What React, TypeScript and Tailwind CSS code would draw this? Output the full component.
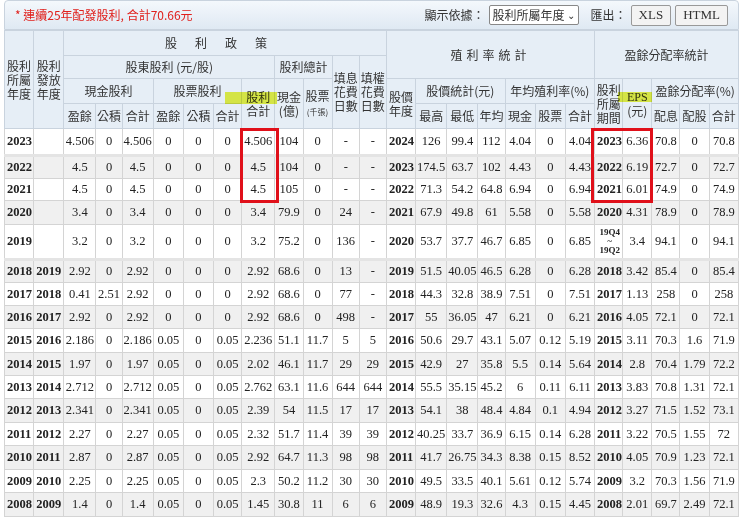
const widths = [29, 30, 32, 26, 31, 30, 30, 28, 33, 28, 29, 27, 27, 29, 31, 31, 27, 30, 30, 29, 28, 29, 28, 29, 29];

type Row = { c: string[]; h: number; gap?: boolean };

const rows: Row[] = [
  { c: '2023,,4.506,0,4.506,0,0,0,4.506,104,0,-,-,2024,126,99.4,112,4.04,0,4.04,2023,6.36,70.8,0,70.8'.split(','), h: 27 },
  { c: '2022,,4.5,0,4.5,0,0,0,4.5,104,0,-,-,2023,174.5,63.7,102,4.43,0,4.43,2022,6.19,72.7,0,72.7'.split(','), h: 23, gap: true },
  { c: '2021,,4.5,0,4.5,0,0,0,4.5,105,0,-,-,2022,71.3,54.2,64.8,6.94,0,6.94,2021,6.01,74.9,0,74.9'.split(','), h: 22 },
  { c: '2020,,3.4,0,3.4,0,0,0,3.4,79.9,0,24,-,2021,67.9,49.8,61,5.58,0,5.58,2020,4.31,78.9,0,78.9'.split(','), h: 24 },
  { c: '2019,,3.2,0,3.2,0,0,0,3.2,75.2,0,136,-,2020,53.7,37.7,46.7,6.85,0,6.85,Q,3.4,94.1,0,94.1'.split(','), h: 35 },
  { c: '2018,2019,2.92,0,2.92,0,0,0,2.92,68.6,0,13,-,2019,51.5,40.05,46.5,6.28,0,6.28,2018,3.42,85.4,0,85.4'.split(','), h: 23, gap: true },
  { c: '2017,2018,0.41,2.51,2.92,0,0,0,2.92,68.6,0,77,-,2018,44.3,32.8,38.9,7.51,0,7.51,2017,1.13,258,0,258'.split(','), h: 23 },
  { c: '2016,2017,2.92,0,2.92,0,0,0,2.92,68.6,0,498,-,2017,55,36.05,47,6.21,0,6.21,2016,4.05,72.1,0,72.1'.split(','), h: 23 },
  { c: '2015,2016,2.186,0,2.186,0.05,0,0.05,2.236,51.1,11.7,5,5,2016,50.6,29.7,43.1,5.07,0.12,5.19,2015,3.11,70.3,1.6,71.9'.split(','), h: 24 },
  { c: '2014,2015,1.97,0,1.97,0.05,0,0.05,2.02,46.1,11.7,29,29,2015,42.9,27,35.8,5.5,0.14,5.64,2014,2.8,70.4,1.79,72.2'.split(','), h: 23 },
  { c: '2013,2014,2.712,0,2.712,0.05,0,0.05,2.762,63.1,11.6,644,644,2014,55.5,35.15,45.2,6,0.11,6.11,2013,3.83,70.8,1.31,72.1'.split(','), h: 23 },
  { c: '2012,2013,2.341,0,2.341,0.05,0,0.05,2.39,54,11.5,17,17,2013,54.1,38,48.4,4.84,0.1,4.94,2012,3.27,71.5,1.52,73.1'.split(','), h: 24 },
  { c: '2011,2012,2.27,0,2.27,0.05,0,0.05,2.32,51.7,11.4,39,39,2012,40.25,33.7,36.9,6.15,0.14,6.28,2011,3.22,70.5,1.55,72'.split(','), h: 23 },
  { c: '2010,2011,2.87,0,2.87,0.05,0,0.05,2.92,64.7,11.3,98,98,2011,41.7,26.75,34.3,8.38,0.15,8.52,2010,4.05,70.9,1.23,72.1'.split(','), h: 24 },
  { c: '2009,2010,2.25,0,2.25,0.05,0,0.05,2.3,50.2,11.2,30,30,2010,49.5,33.5,40.1,5.61,0.12,5.74,2009,3.2,70.3,1.56,71.9'.split(','), h: 23 },
  { c: '2008,2009,1.4,0,1.4,0.05,0,0.05,1.45,30.8,11,6,6,2009,48.9,19.3,32.6,4.3,0.15,4.45,2008,2.01,69.7,2.49,72.1'.split(','), h: 24 },
];

const bold = new Set([0, 1, 13, 20]);
const th = 'border border-[#c9d3de] font-normal text-[#333] leading-[14px] p-0 whitespace-nowrap overflow-hidden';

export default function App() {
  return (
    <div className="w-[740px] h-[523px] overflow-hidden bg-white" style={{ fontFamily: '"Liberation Serif", "Noto Sans CJK TC", serif' }}>
      <div className="relative w-[735px] ml-[4px]">
        <div className="h-[30px] flex items-center justify-between px-[10px] bg-gradient-to-b from-[#f4f8fc] to-[#dfe9f3] border border-[#c9d3de] rounded-t-[4px] text-[12px]" style={{ fontFamily: '"Noto Sans CJK TC", sans-serif' }}>
          <span className="text-[#e0201c]">* 連續25年配發股利, 合計70.66元</span>
          <div className="flex items-center gap-[4px] text-[#333]">
            <span>顯示依據：</span>
            <span className="border border-[#888] rounded-[2px] bg-white px-[3px] h-[20px] flex items-center gap-[2px] leading-none">股利所屬年度 <span className="text-[10px]">⌄</span></span>
            <span className="ml-[8px]">匯出：</span>
            <span className="border border-[#999] rounded-[2px] bg-[#f3f3f3] px-[7px] h-[21px] flex items-center text-[13px]" style={{ fontFamily: '"Liberation Serif", serif' }}>XLS</span>
            <span className="border border-[#999] rounded-[2px] bg-[#f3f3f3] px-[7px] h-[21px] flex items-center text-[13px]" style={{ fontFamily: '"Liberation Serif", serif' }}>HTML</span>
          </div>
        </div>
        <table className="table-fixed border-collapse w-[735px] text-center">
          <colgroup>
            {widths.map((w, i) => <col key={i} style={{ width: w }} />)}
          </colgroup>
          <thead className="bg-[#e6eef6] text-[12px]" style={{ fontFamily: '"Noto Sans CJK TC", sans-serif' }}>
            <tr className="h-[25px]">
              <th rowSpan={4} className={th + ' font-bold'}>股利<br />所屬<br />年度</th>
              <th rowSpan={4} className={th + ' font-bold'}>股利<br />發放<br />年度</th>
              <th colSpan={11} className={th + ' font-bold tracking-[18px]'}>股利政策</th>
              <th colSpan={7} rowSpan={2} className={th + ' font-bold tracking-[4px]'}>殖利率統計</th>
              <th colSpan={5} rowSpan={2} className={th + ' font-bold'}>盈餘分配率統計</th>
            </tr>
            <tr className="h-[23px]">
              <th colSpan={7} className={th}>股東股利 (元/股)</th>
              <th colSpan={2} className={th}>股利總計</th>
              <th rowSpan={3} className={th}>填息<br />花費<br />日數</th>
              <th rowSpan={3} className={th}>填權<br />花費<br />日數</th>
            </tr>
            <tr className="h-[25px]">
              <th colSpan={3} className={th}>現金股利</th>
              <th colSpan={3} className={th}>股票股利</th>
              <th rowSpan={2} className={th}>股利<br />合計</th>
              <th rowSpan={2} className={th}>現金<br />(億)</th>
              <th rowSpan={2} className={th}>股票<br /><span className="text-[8px]">(千張)</span></th>
              <th rowSpan={2} className={th + ' font-bold'}>股價<br />年度</th>
              <th colSpan={3} className={th}>股價統計(元)</th>
              <th colSpan={3} className={th}>年均殖利率(%)</th>
              <th rowSpan={2} className={th + ' font-bold'}>股利<br />所屬<br />期間</th>
              <th rowSpan={2} className={th}><span style={{ fontFamily: '"Liberation Serif", serif' }}>EPS</span><br />(元)</th>
              <th colSpan={3} className={th}>盈餘分配率(%)</th>
            </tr>
            <tr className="h-[25px]">
              {['盈餘', '公積', '合計', '盈餘', '公積', '合計', '最高', '最低', '年均', '現金', '股票', '合計', '配息', '配股', '合計'].map((t, i) => (
                <th key={i} className={th}>{t}</th>
              ))}
            </tr>
          </thead>
          <tbody className="text-[12.5px]">
            {rows.map((r, ri) => (
              <tr key={ri} className={(ri % 2 === 1 ? 'bg-[#f0f0f0] ' : 'bg-white ') + (r.gap ? 'border-t-[3px] border-t-[#e4e4e4]' : '')} style={{ height: r.h }}>
                {r.c.map((v, ci) => (
                  <td key={ci} className={'border border-[#d4d4d4] text-[#222] whitespace-nowrap p-0 ' + (bold.has(ci) ? 'font-bold text-left pl-[2px]' : '')}>
                    {v === 'Q' ? (
                      <div className="text-[9px] font-bold leading-[9px] text-center">19Q4<br />~<br />19Q2</div>
                    ) : v}
                  </td>
                ))}
              </tr>
            ))}
          </tbody>
        </table>
        <div className="absolute left-[221px] top-[92px] w-[52px] h-[12px] bg-[#e6f21a]/80 mix-blend-multiply" />
        <div className="absolute left-[614px] top-[92px] w-[34px] h-[10px] bg-[#e6f21a]/80 mix-blend-multiply" />
        <div className="absolute left-[236px] top-[128px] w-[39px] h-[75px] border-[3px] border-[#e0101a]" />
        <div className="absolute left-[587px] top-[128px] w-[62px] h-[75px] border-[3px] border-[#e0101a]" />
      </div>
    </div>
  );
}
